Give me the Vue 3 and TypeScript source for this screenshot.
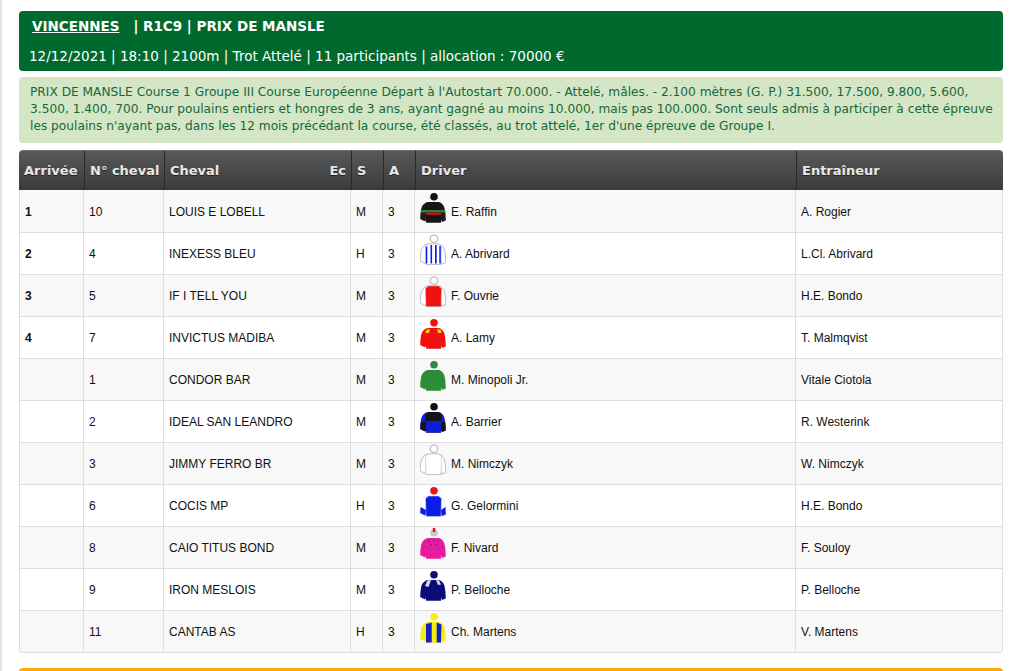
<script setup lang="ts">
interface Mark { d: string; fill: string }
interface Jacket { cap: string; capEdge?: string; sleeve: string; body: string; edge?: string; marks?: Mark[] }
interface Runner { pos: string; num: number; name: string; sex: string; age: number; driver: string; trainer: string; jacket: Jacket }

const sleeves = 'M8.5 10 Q3 10.5 1.2 16.5 Q.2 22 .2 27 L5 29.5 L6.5 27 L6.5 30.5 L21 30.5 L21 27.5 L22 30 L25.8 28.5 Q25.8 20.5 24.4 15.5 Q22.5 10.5 18.5 10 Z'
const torso = 'M8.5 10 L18.5 10 L21.5 12.5 L21 30.5 L6 30.5 L5.5 12.5 Z'

const blue = '#0a1ee8'
const runners: Runner[] = [
  { pos: '1', num: 10, name: 'LOUIS E LOBELL', sex: 'M', age: 3, driver: 'E. Raffin', trainer: 'A. Rogier', jacket: { cap: '#111', sleeve: '#1c1c1c', body: '#151515', marks: [{ d: 'M1 18 L25 18 L25.4 20.5 L.7 20.5 Z', fill: '#2e7d32' }, { d: 'M5.8 20.5 L21.2 20.5 L21.2 23 L5.8 23 Z', fill: '#b01818' }] } },
  { pos: '2', num: 4, name: 'INEXESS BLEU', sex: 'H', age: 3, driver: 'A. Abrivard', trainer: 'L.Cl. Abrivard', jacket: { cap: '#fff', capEdge: '#999', sleeve: '#fff', body: '#fff', edge: '#aaa', marks: [{ d: 'M5.8 12.5h1.5v17H5.8z', fill: blue }, { d: 'M10.5 11h1.6v18.5h-1.6z', fill: blue }, { d: 'M15 11h1.7v18.5H15z', fill: blue }, { d: 'M19.3 12h1.5v17.5h-1.5z', fill: blue }] } },
  { pos: '3', num: 5, name: 'IF I TELL YOU', sex: 'M', age: 3, driver: 'F. Ouvrie', trainer: 'H.E. Bondo', jacket: { cap: '#fff', capEdge: '#999', sleeve: '#fff', body: '#f31010', edge: '#aaa' } },
  { pos: '4', num: 7, name: 'INVICTUS MADIBA', sex: 'M', age: 3, driver: 'A. Lamy', trainer: 'T. Malmqvist', jacket: { cap: '#f01010', sleeve: '#f01010', body: '#f01010', marks: [{ d: 'M6 12 L10 11 L9 15 L5.5 15 Z', fill: '#f5d000' }, { d: 'M21 12 L17 11 L18 15 L21.5 15 Z', fill: '#f5d000' }] } },
  { pos: '', num: 1, name: 'CONDOR BAR', sex: 'M', age: 3, driver: 'M. Minopoli Jr.', trainer: 'Vitale Ciotola', jacket: { cap: '#2e8b37', sleeve: '#2e8b37', body: '#2e8b37' } },
  { pos: '', num: 2, name: 'IDEAL SAN LEANDRO', sex: 'M', age: 3, driver: 'A. Barrier', trainer: 'R. Westerink', jacket: { cap: '#111', sleeve: '#0f1dd8', body: '#151515', marks: [{ d: 'M5.8 19h15.4v11.5H5.8z', fill: '#0f1dd8' }, { d: 'M.8 20 L5.8 20 L6.3 28 L5 29.5 L.2 27 Z', fill: '#151515' }, { d: 'M25.2 20 L21.2 20 L21 28 L22 30 L25.8 28.5 Z', fill: '#151515' }] } },
  { pos: '', num: 3, name: 'JIMMY FERRO BR', sex: 'M', age: 3, driver: 'M. Nimczyk', trainer: 'W. Nimczyk', jacket: { cap: '#fff', capEdge: '#999', sleeve: '#fff', body: '#fff', edge: '#aaa' } },
  { pos: '', num: 6, name: 'COCIS MP', sex: 'H', age: 3, driver: 'G. Gelormini', trainer: 'H.E. Bondo', jacket: { cap: '#f01010', sleeve: '#fff', body: blue, edge: '#e4e4e4', marks: [{ d: 'M.6 21 L6 24 L5.5 29 L5 29.5 L.2 27 Z', fill: blue }, { d: 'M25.4 21 L21 24 L21.5 29.5 L22 30 L25.8 28.5 Z', fill: blue }] } },
  { pos: '', num: 8, name: 'CAIO TITUS BOND', sex: 'M', age: 3, driver: 'F. Nivard', trainer: 'F. Souloy', jacket: { cap: '#c8c8c8', sleeve: '#ea1a9c', body: '#ea1a9c', marks: [{ d: 'M12.8 0h2.4v4h-2.4z', fill: '#f01010' }, { d: 'M8 12h2v2H8zM13 12h2v2h-2zM17 12h2v2h-2zM10 16h2v2h-2zM15 16h2v2h-2zM8 20h1.6v1.6H8zM18 20h1.6v1.6H18zM3 18h1.6v1.6H3zM22 18h1.6v1.6H22z', fill: '#8a2aa8' }] } },
  { pos: '', num: 9, name: 'IRON MESLOIS', sex: 'M', age: 3, driver: 'P. Belloche', trainer: 'P. Belloche', jacket: { cap: '#0c0c78', sleeve: '#0c0c78', body: '#0c0c78', marks: [{ d: 'M7.5 10.5 L11 10 L8.5 17 L5 16 Z', fill: '#dcdcf0' }, { d: 'M19 10.5 L16 10 L18 15 L21 14.5 Z', fill: '#dcdcf0' }] } },
  { pos: '', num: 11, name: 'CANTAB AS', sex: 'H', age: 3, driver: 'Ch. Martens', trainer: 'V. Martens', jacket: { cap: '#f5ee10', sleeve: '#f5ee10', body: '#f5ee10', marks: [{ d: 'M6 12 L11.7 10.5 L11.7 30.5 L6 30.5 Z', fill: '#1420c8' }, { d: 'M16.7 10.5 L21.5 12.5 L21 30.5 L16.7 30.5 Z', fill: '#1420c8' }] } }
]
</script>

<template>
  <div class="page">
    <header class="race-head">
      <div class="race-title"><a class="venue">VINCENNES</a><span class="race-ref">| R1C9 | PRIX DE MANSLE</span></div>
      <div class="race-meta">12/12/2021 | 18:10 | 2100m | Trot Attelé | 11 participants | allocation : 70000 €</div>
    </header>
    <p class="race-desc">PRIX DE MANSLE Course 1 Groupe III Course Européenne Départ à l'Autostart 70.000. - Attelé, mâles. - 2.100 mètres (G. P.) 31.500, 17.500, 9.800, 5.600, 3.500, 1.400, 700. Pour poulains entiers et hongres de 3 ans, ayant gagné au moins 10.000, mais pas 100.000. Sont seuls admis à participer à cette épreuve les poulains n'ayant pas, dans les 12 mois précédant la course, été classés, au trot attelé, 1er d'une épreuve de Groupe I.</p>
    <table class="runners">
      <colgroup>
        <col class="c-pos" /><col class="c-num" /><col class="c-name" /><col class="c-s" /><col class="c-a" /><col class="c-driver" /><col />
      </colgroup>
      <thead>
        <tr>
          <th>Arrivée</th>
          <th>N° cheval</th>
          <th><div class="th-split"><span>Cheval</span><span>Ec</span></div></th>
          <th>S</th>
          <th>A</th>
          <th>Driver</th>
          <th>Entraîneur</th>
        </tr>
      </thead>
      <tbody>
        <tr v-for="r in runners" :key="r.num">
          <td class="pos">{{ r.pos }}</td>
          <td>{{ r.num }}</td>
          <td>{{ r.name }}</td>
          <td>{{ r.sex }}</td>
          <td>{{ r.age }}</td>
          <td>
            <div class="driver">
              <svg class="jacket" width="26" height="32" viewBox="0 0 26 32" aria-hidden="true">
                <circle cx="14" cy="4.7" r="3.8" :fill="r.jacket.cap" :stroke="r.jacket.capEdge || 'none'" stroke-width=".8" />
                <path :d="sleeves" :fill="r.jacket.sleeve" :stroke="r.jacket.edge || 'none'" stroke-width=".8" />
                <path :d="torso" :fill="r.jacket.body" :stroke="r.jacket.edge || 'none'" stroke-width=".5" />
                <path v-for="(m, i) in r.jacket.marks" :key="i" :d="m.d" :fill="m.fill" />
              </svg>
              <span>{{ r.driver }}</span>
            </div>
          </td>
          <td>{{ r.trainer }}</td>
        </tr>
      </tbody>
    </table>
    <div class="next-bar"></div>
  </div>
</template>

<style>
html, body { margin: 0; height: 671px; overflow: hidden; background: #fff; }
</style>

<style scoped>
.page {
  box-sizing: border-box;
  height: 671px;
  overflow: hidden;
  border-left: 2px solid #e2e2e2;
  padding: 11px 9px 0 17px;
  font-family: "DejaVu Sans", Verdana, sans-serif;
}
.race-head {
  height: 60px;
  box-sizing: border-box;
  background: #006a2e;
  border-radius: 4px;
  color: #fff;
  padding: 6px 10px 0;
}
.race-title {
  font-size: 13.5px;
  font-weight: bold;
  line-height: 18px;
  padding-left: 3px;
}
.venue { text-decoration: underline; margin-right: 14px; }
.race-meta { font-size: 13.5px; line-height: 18px; margin-top: 12px; }
.race-desc {
  margin: 6px 0 7px;
  height: 66px;
  box-sizing: border-box;
  background: #d4e6c5;
  border-radius: 4px;
  color: #14683a;
  font-size: 12.2px;
  line-height: 17px;
  padding: 7px 5px 0 11px;
}
.runners {
  width: 984px;
  table-layout: fixed;
  border-collapse: separate;
  border-spacing: 0;
  font-family: "Liberation Sans", Arial, sans-serif;
  font-size: 12px;
  color: #111;
}
.c-pos { width: 65px; }
.c-num { width: 80px; }
.c-name { width: 187px; }
.c-s, .c-a { width: 32px; }
.c-driver { width: 381px; }
th {
  height: 40px;
  box-sizing: border-box;
  padding: 0 5px;
  text-align: left;
  font-family: "DejaVu Sans", Verdana, sans-serif;
  font-size: 13px;
  font-weight: bold;
  color: #e8e8e8;
  white-space: nowrap;
  background: linear-gradient(#585858, #3b3b3b);
  border-top: 1px solid #6e6e6e;
  border-left: 1px solid #2a2a2a;
  text-shadow: 0 1px 0 #222;
}
th:first-child { border-top-left-radius: 4px; border-left: 0; }
th:last-child { border-top-right-radius: 4px; }
.th-split { display: flex; justify-content: space-between; }
td {
  height: 42px;
  box-sizing: border-box;
  padding: 0 5px;
  background: #fff;
  border-right: 1px solid #dedede;
  border-bottom: 1px solid #dedede;
}
tbody tr:first-child td { height: 43px; padding-top: 1px; }
td:first-child { border-left: 1px solid #dedede; }
tbody tr:nth-child(odd) td { background: #f8f8f8; }
tbody tr:last-child td:first-child { border-bottom-left-radius: 4px; }
tbody tr:last-child td:last-child { border-bottom-right-radius: 4px; }
.pos { font-weight: bold; }
.driver { display: flex; align-items: center; gap: 5px; }
.jacket { display: block; flex: none; margin-top: -7px; filter: blur(0.35px); }
.next-bar {
  height: 12px;
  margin-top: 15px;
  background: #ffa800;
  border-radius: 4px 4px 0 0;
}
</style>
